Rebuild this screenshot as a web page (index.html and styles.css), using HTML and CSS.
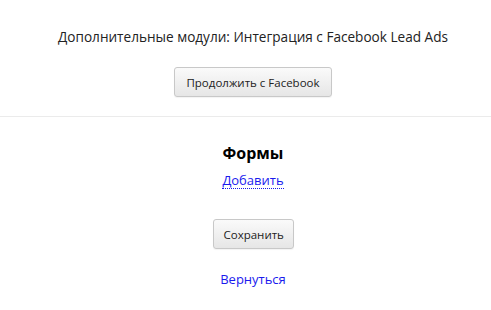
FILE: index.html
```html
<!DOCTYPE html>
<html lang="ru">
<head>
<meta charset="utf-8">
<title>Facebook Lead Ads</title>
<link rel="stylesheet" href="styles.css">
</head>
<body>
<header class="top">
  <div class="title">Дополнительные модули: Интеграция с Facebook Lead Ads</div>
  <button class="btn btn-fb">Продолжить с Facebook</button>
</header>
<main class="content">
  <h2 class="heading">Формы</h2>
  <a class="add-link" href="#">Добавить</a>
  <button class="btn btn-save">Сохранить</button>
  <a class="back-link" href="#">Вернуться</a>
</main>
</body>
</html>
```
FILE: styles.css
```css
html, body {
  margin: 0;
  padding: 0;
  background: #fff;
}
body {
  font-family: "Open Sans", "Liberation Sans", sans-serif;
  color: #222;
}
.top {
  display: flex;
  flex-direction: column;
  align-items: center;
  padding: 27px 0 19px 15px;
  border-bottom: 1px solid #ebebeb;
}
.title {
  font-size: 13.6px;
  line-height: 20px;
  color: #222;
}
.btn {
  box-sizing: border-box;
  font-family: "Open Sans", "Liberation Sans", sans-serif;
  font-size: 11.5px;
  color: #222;
  height: 30px;
  padding: 0 10px;
  white-space: nowrap;
  border: 1px solid #c8c8c8;
  border-radius: 3px;
  background: linear-gradient(#fafafa, #e6e6e6);
  box-shadow: 0 1px 1px rgba(0,0,0,0.05);
}
.btn-fb {
  margin-top: 20px;
  width: 158px;
}
.content {
  display: flex;
  flex-direction: column;
  align-items: center;
  padding: 25px 0 0 15px;
}
.heading {
  margin: 0;
  font-size: 16px;
  line-height: 22px;
  font-weight: 700;
  color: #000;
}
.add-link {
  margin-top: 8px;
  font-size: 13px;
  line-height: 16px;
  color: #1a1aee;
  text-decoration: none;
  border-bottom: 1px dotted #1a1aee;
}
.btn-save {
  margin-top: 30px;
  width: 81px;
}
.back-link {
  margin-top: 21px;
  font-size: 13px;
  line-height: 18px;
  color: #1a1aee;
  text-decoration: none;
}
```
